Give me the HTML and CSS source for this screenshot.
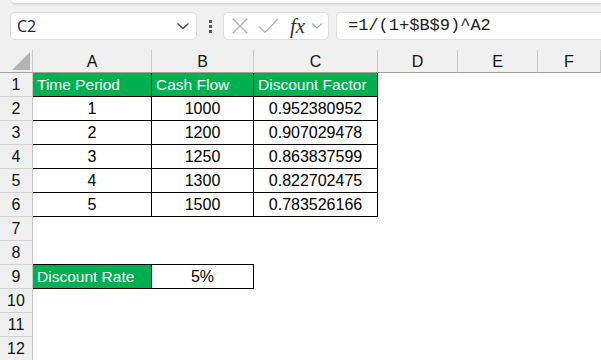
FILE: index.html
```html
<!DOCTYPE html>
<html lang="en">
<head>
    <meta charset="UTF-8">
    <title>Discount Factor</title>
    <link rel="stylesheet" href="styles.css">
</head>
<body>
    <div class="ribbon-edge"></div>
    <div class="toolbar">
        <div class="namebox">
            <span>C2</span>
            <svg width="14" height="10" viewBox="0 0 14 10"><path d="M1.5 2.5 L7 7.5 L12.5 2.5" fill="none" stroke="#444" stroke-width="1.4"/></svg>
        </div>
        <div class="dots"><i></i><i></i><i></i></div>
        <div class="fxbox">
            <svg width="16" height="16" viewBox="0 0 16 16"><path d="M0.5 0.5 L15.5 15.5 M15.5 0.5 L0.5 15.5" fill="none" stroke="#b0b0b0" stroke-width="1.2"/></svg>
            <svg width="21" height="16" viewBox="0 0 21 16"><path d="M1 8.5 L7 14.5 L20 1" fill="none" stroke="#b0b0b0" stroke-width="1.2"/></svg>
            <span class="fx">fx</span>
            <svg width="12" height="8" viewBox="0 0 12 8"><path d="M1 1.5 L6 6 L11 1.5" fill="none" stroke="#aaa" stroke-width="1.2"/></svg>
        </div>
        <div class="formula">=1/(1+$B$9)^A2</div>
    </div>

    <div class="sheet">
        <div class="corner"><div class="tri"></div></div>
        <div class="colhead">A</div>
        <div class="colhead">B</div>
        <div class="colhead">C</div>
        <div class="colhead">D</div>
        <div class="colhead">E</div>
        <div class="colhead">F</div>

        <div class="rowhead">1</div>
        <div class="cell t head left">Time Period</div>
        <div class="cell t head left">Cash Flow</div>
        <div class="cell t head left">Discount Factor</div>
        <div class="cell"></div><div class="cell"></div><div class="cell"></div>

        <div class="rowhead">2</div>
        <div class="cell t">1</div><div class="cell t">1000</div><div class="cell t">0.952380952</div>
        <div class="cell"></div><div class="cell"></div><div class="cell"></div>

        <div class="rowhead">3</div>
        <div class="cell t">2</div><div class="cell t">1200</div><div class="cell t">0.907029478</div>
        <div class="cell"></div><div class="cell"></div><div class="cell"></div>

        <div class="rowhead">4</div>
        <div class="cell t">3</div><div class="cell t">1250</div><div class="cell t">0.863837599</div>
        <div class="cell"></div><div class="cell"></div><div class="cell"></div>

        <div class="rowhead">5</div>
        <div class="cell t">4</div><div class="cell t">1300</div><div class="cell t">0.822702475</div>
        <div class="cell"></div><div class="cell"></div><div class="cell"></div>

        <div class="rowhead">6</div>
        <div class="cell t">5</div><div class="cell t">1500</div><div class="cell t">0.783526166</div>
        <div class="cell"></div><div class="cell"></div><div class="cell"></div>

        <div class="rowhead">7</div>
        <div class="cell"></div><div class="cell"></div><div class="cell"></div>
        <div class="cell"></div><div class="cell"></div><div class="cell"></div>

        <div class="rowhead">8</div>
        <div class="cell above"></div><div class="cell above"></div><div class="cell"></div>
        <div class="cell"></div><div class="cell"></div><div class="cell"></div>

        <div class="rowhead">9</div>
        <div class="cell t head left">Discount Rate</div><div class="cell t">5%</div><div class="cell"></div>
        <div class="cell"></div><div class="cell"></div><div class="cell"></div>

        <div class="rowhead">10</div>
        <div class="cell"></div><div class="cell"></div><div class="cell"></div>
        <div class="cell"></div><div class="cell"></div><div class="cell"></div>

        <div class="rowhead">11</div>
        <div class="cell"></div><div class="cell"></div><div class="cell"></div>
        <div class="cell"></div><div class="cell"></div><div class="cell"></div>

        <div class="rowhead">12</div>
        <div class="cell"></div><div class="cell"></div><div class="cell"></div>
        <div class="cell"></div><div class="cell"></div><div class="cell"></div>
    </div>
</body>
</html>
```

FILE: styles.css
```css
body {
    margin: 0;
    width: 601px;
    height: 360px;
    overflow: hidden;
    background: #f0f0f0;
    font-family: "Liberation Sans", Arial, sans-serif;
}
.ribbon-edge {
    height: 3px;
    margin-left: 12px;
    background: #fff;
    border-bottom-left-radius: 6px;
    box-shadow: 0 1px 3px rgba(0, 0, 0, 0.18);
}
.toolbar {
    height: 47px;
    display: flex;
    align-items: flex-start;
    padding-top: 9px;
    box-sizing: border-box;
    overflow: hidden;
}
.toolbar > div {
    flex-shrink: 0;
}
.namebox {
    margin-left: 10px;
    width: 187px;
    height: 28px;
    box-sizing: border-box;
    background: #fff;
    border: 1px solid #dcdcdc;
    border-radius: 5px;
    display: flex;
    align-items: center;
    justify-content: space-between;
    padding: 0 6px 0 6px;
    font-family: "Open Sans", sans-serif;
    font-size: 16px;
    color: #222;
}
.dots {
    width: 26px;
    height: 28px;
    display: flex;
    flex-direction: column;
    align-items: center;
    justify-content: center;
    gap: 2px;
}
.dots i {
    width: 3px;
    height: 3px;
    background: #555;
}
.fxbox {
    width: 106px;
    height: 28px;
    box-sizing: border-box;
    background: #fff;
    border: 1px solid #dcdcdc;
    border-radius: 5px;
    display: flex;
    align-items: center;
    padding-left: 8px;
    gap: 10px;
}
.fxbox .fx {
    font-family: "Liberation Serif", serif;
    font-style: italic;
    font-size: 21px;
    color: #333;
    margin-left: 1px;
    margin-right: -4px;
}
.formula {
    margin-left: 7px;
    width: 300px;
    height: 28px;
    box-sizing: border-box;
    background: #fff;
    border: 1px solid #dcdcdc;
    border-radius: 5px 0 0 5px;
    border-right: none;
    padding-left: 11px;
    line-height: 26px;
    font-family: "Liberation Mono", monospace;
    font-size: 17px;
    color: #222;
}
.sheet {
    display: grid;
    grid-template-columns: 33px 119px 102px 124px 80px 80px 63px;
    grid-template-rows: 23px repeat(12, 24px);
    background: #fff;
}
.corner {
    background: #f0f0f0;
    border-right: 1px solid #c8c8c8;
    border-bottom: 1px solid #a0a0a0;
    position: relative;
}
.tri {
    position: absolute;
    right: 2px;
    bottom: 2px;
    width: 0;
    height: 0;
    border-left: 18px solid transparent;
    border-bottom: 18px solid #b4b4b4;
}
.colhead {
    background: #f0f0f0;
    border-right: 1px solid #c8c8c8;
    border-bottom: 1px solid #a0a0a0;
    text-align: center;
    font-size: 16px;
    line-height: 24px;
    color: #111;
}
.rowhead {
    background: #f0f0f0;
    border-right: 1px solid #c8c8c8;
    border-bottom: 1px solid #d0d0d0;
    text-align: center;
    font-size: 16px;
    line-height: 24px;
    color: #111;
}
.cell {
    box-sizing: border-box;
    font-size: 16px;
    line-height: 23px;
    text-align: center;
    color: #000;
    white-space: nowrap;
}
.cell.t {
    border-right: 1px solid #000;
    border-bottom: 1px solid #000;
}
.cell.above {
    border-bottom: 1px solid #000;
}
.cell.head {
    background: #00b050;
    color: #fff;
    font-size: 15.5px;
}
.cell.left {
    text-align: left;
    padding-left: 4px;
}
.sheet > div {
    box-sizing: border-box;
}
```
